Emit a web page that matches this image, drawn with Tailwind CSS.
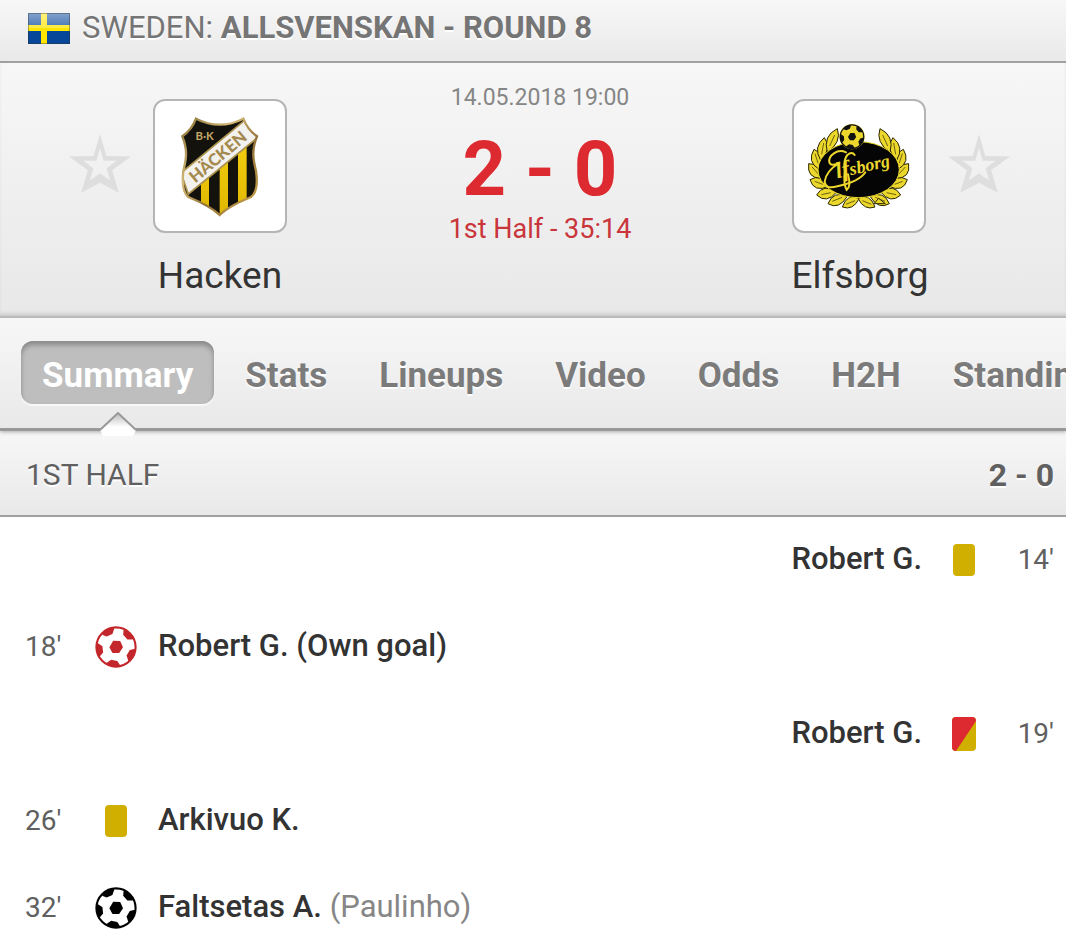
<!DOCTYPE html>
<html lang="en">
<head>
<meta charset="utf-8">
<meta name="viewport" content="width=device-width, initial-scale=1">
<title>Hacken - Elfsborg</title>
<script src="https://cdn.jsdelivr.net/npm/@tailwindcss/browser@4"></script>
</head>
<body class="bg-white font-['Roboto',sans-serif] text-[#333] overflow-x-hidden">

<svg width="0" height="0" class="absolute" aria-hidden="true">
  <defs>
    <clipPath id="ballClip"><circle r="57"/></clipPath>
    <path id="patch" d="M-22-62L-18-48L-10-39L8-38L18-48L22-62Z"/>
    <g id="ball">
      <g clip-path="url(#ballClip)" fill="currentColor">
        <use href="#patch" transform="rotate(-27)"/>
        <use href="#patch" transform="rotate(45)"/>
        <use href="#patch" transform="rotate(117)"/>
        <use href="#patch" transform="rotate(189)"/>
        <use href="#patch" transform="rotate(261)"/>
        <path d="M-8-18L12-17L20 1L9 17L-10 17L-19 1Z"/>
      </g>
      <circle r="56" fill="none" stroke="currentColor" stroke-width="6"/>
    </g>
    <g id="laurel" fill="#ecd72c" stroke="#2a2600" stroke-width="3" stroke-linejoin="round">
      <path d="M226 322Q189 306 175 348Q207 360 226 322Z"/>
      <path d="M190 316Q148 298 132 338Q164 358 190 316Z"/>
      <path d="M158 303Q118 276 98 312Q128 340 158 303Z"/>
      <path d="M134 286Q112 246 78 266Q90 306 134 286Z"/>
      <path d="M112 262Q116 218 74 218Q68 262 112 262Z"/>
      <path d="M104 234Q126 190 90 175Q68 212 104 234Z"/>
      <path d="M110 208Q146 172 121 140Q86 168 110 208Z"/>
      <path d="M130 184Q174 154 160 113Q116 134 130 184Z"/>
      <path d="M213 329L186 340M174 319L145 331M140 305L112 311M116 280L92 271M104 250L84 228M102 216L93 188M113 190L119 156M137 165L152 132" fill="none" stroke-width="2"/>
    </g>
  </defs>
</svg>

<header class="flex h-[63px] items-center gap-3 border-b-2 border-[#a0a0a0] bg-linear-to-b from-[#f7f7f7] to-[#e9e9e9] pl-7 pb-1 text-[31px] text-[#757575] text-shadow-[0_2px_0_#fff]">
  <svg class="h-[31px] w-[42px] shrink-0" viewBox="0 0 42 31" role="img" aria-label="Sweden">
    <defs><linearGradient id="shine" x2="0" y2="1"><stop stop-color="#fff" stop-opacity=".5"/><stop offset="1" stop-color="#fff" stop-opacity=".25"/></linearGradient></defs>
    <rect width="42" height="31" fill="#07479a"/>
    <path d="M13 0h6v31h-6zM0 12h42v6H0z" fill="#fee500"/>
    <rect width="42" height="15" fill="url(#shine)"/>
    <rect x=".5" y=".5" width="41" height="30" fill="none" stroke="#333" stroke-opacity=".4"/>
  </svg>
  <h1 class="whitespace-nowrap">SWEDEN: <b>ALLSVENSKAN - ROUND 8</b></h1>
</header>

<section class="flex h-[255px] justify-center border-b-2 border-[#bdbdbd] bg-linear-to-b from-[#f7f7f7] to-[#e8e8e8] pl-[14px] pt-9 inset-shadow-[0_-4px_4px_-2px_#c8c8c8]">
  <div class="w-80">
    <div class="flex items-center gap-[22px] pl-[9px]">
      <button aria-label="Add Hacken to favourites" class="size-[62px]">
        <svg class="size-full" viewBox="27 33 188 188"><path fill="#dedede" fill-rule="evenodd" d="M121 30L140 97L215 98L158 140L178 208L121 178L64 208L84 140L27 98L102 97ZM121 73L110 111L70 111L101 134L90 171L121 150L152 171L141 134L172 111L132 111Z"/></svg>
      </button>
      <div class="size-[134px] rounded-xl border-2 border-[#b5b5b5] bg-white">
        <svg class="size-full" viewBox="30 30 390 390" role="img" aria-label="Hacken crest">
          <defs>
            <clipPath id="shield"><path id="shieldShape" d="M153 83Q188 101 224 101Q260 101 295 83Q308 117 336 136C316 185 328 215 333 240Q342 300 318 318Q250 346 224 372Q198 346 130 318Q108 300 115 240C120 215 132 185 112 136Q140 117 153 83Z"/></clipPath>
            <linearGradient id="gold" x2="1" y2="1"><stop stop-color="#8c7338"/><stop offset=".35" stop-color="#d3b976"/><stop offset=".6" stop-color="#94733a"/><stop offset="1" stop-color="#d0a74e"/></linearGradient>
            <linearGradient id="stripe" x2="0" y2="1"><stop stop-color="#f4cf10"/><stop offset="1" stop-color="#e0b600"/></linearGradient>
          </defs>
          <g clip-path="url(#shield)">
            <rect x="100" y="70" width="250" height="310" fill="#14120c"/>
            <path d="M168 220h24v150h-24zM224 180h25v200h-25zM279 140h26v220h-26z" fill="url(#stripe)"/>
            <path d="M108 246L299 88L345 134L130 309Z" fill="#f4f2ee" stroke="#ad9350" stroke-width="5"/>
          </g>
          <use href="#shieldShape" fill="none" stroke="url(#gold)" stroke-width="7"/>
          <text x="179" y="146" text-anchor="middle" font-family="Lato, sans-serif" font-weight="700" font-size="34" fill="#c4a968">B·K</text>
          <text transform="translate(230 211) rotate(-40)" text-anchor="middle" font-family="Lato, sans-serif" font-weight="900" font-size="50" fill="#a48a50">HÄCKEN</text>
        </svg>
      </div>
    </div>
    <h2 class="mt-5 text-center text-[37px] leading-[46px]">Hacken</h2>
  </div>

  <div class="-mt-4 w-80 text-center">
    <p class="text-[23px] leading-[30px] text-[#868686]">14.05.2018 19:00</p>
    <p class="mt-5 text-[76px] leading-[72px] font-bold text-[#dc2a30]">2 - 0</p>
    <p class="mt-2 text-[27px] leading-8 text-[#c9353a]">1st Half - 35:14</p>
  </div>

  <div class="w-80">
    <div class="flex items-center justify-end gap-[22px] pr-[10px]">
      <div class="size-[134px] rounded-xl border-2 border-[#b5b5b5] bg-white">
        <svg class="size-full" viewBox="30 30 390 390" role="img" aria-label="Elfsborg crest">
          <use href="#laurel"/>
          <use href="#laurel" transform="translate(448 0) scale(-1 1)"/>
          <path d="M270 338L284 322L304 338Z" fill="#ecd72c" stroke="#2a2600" stroke-width="3"/>
          <ellipse cx="224" cy="236" rx="122" ry="84" fill="#050505" stroke="#ecd72c" stroke-width="3"/>
          <circle cx="204" cy="137" r="38" fill="#ecd72c"/>
          <use href="#ball" transform="translate(204 137) scale(.63)" color="#111"/>
          <g fill="none" stroke="#ecd72c" stroke-width="6" stroke-linecap="round">
            <path d="M186 184C160 172 132 194 136 214Q140 228 166 216M166 216Q126 240 122 272Q124 296 160 286Q226 272 244 244"/>
            <path d="M212 192Q204 180 190 192Q178 206 182 240Q178 280 188 297Q202 288 192 250"/>
          </g>
          <text transform="translate(160 262) rotate(-13)" font-family="Liberation Serif, serif" font-style="italic" font-weight="700" font-size="54" fill="#ecd72c"><tspan font-size="68">lf</tspan>sborg</text>
        </svg>
      </div>
      <button aria-label="Add Elfsborg to favourites" class="size-[62px]">
        <svg class="size-full" viewBox="27 33 188 188"><path fill="#dedede" fill-rule="evenodd" d="M121 30L140 97L215 98L158 140L178 208L121 178L64 208L84 140L27 98L102 97ZM121 73L110 111L70 111L101 134L90 171L121 150L152 171L141 134L172 111L132 111Z"/></svg>
      </button>
    </div>
    <h2 class="mt-5 text-center text-[37px] leading-[46px]">Elfsborg</h2>
  </div>
</section>

<nav class="relative flex h-[113px] items-start gap-[10px] overflow-x-clip border-b-3 border-[#999] bg-linear-to-b from-[#f7f7f7] to-[#e9e9e9] pl-[21px] pt-[23px] text-[35px] leading-[70px] font-bold whitespace-nowrap text-[#7b7b7b] shadow-[0_1px_4px_#aaa]">
  <div class="relative">
    <a href="#summary" aria-current="page" class="block h-[63px] rounded-xl bg-[#bebebe] px-[21px] text-white inset-shadow-[0_4px_5px_#8a8a8a] shadow-[0_2px_0_#f8f8f8]">Summary</a>
    <svg class="absolute top-[71px] left-1/2 h-6 w-10 -translate-x-1/2" viewBox="0 0 40 24" aria-hidden="true">
      <defs><linearGradient id="notch" x2="0" y2="1"><stop stop-color="#bbb"/><stop offset=".6" stop-color="#fff"/></linearGradient></defs>
      <path d="M2 18L20 1L38 18L35 24H5Z" fill="url(#notch)"/>
      <path d="M2 18L20 1L38 18" fill="none" stroke="#999" stroke-width="2"/>
    </svg>
  </div>
  <a href="#stats" class="px-[21px] text-shadow-[0_2px_0_#fff]">Stats</a>
  <a href="#lineups" class="px-[21px] text-shadow-[0_2px_0_#fff]">Lineups</a>
  <a href="#video" class="px-[21px] text-shadow-[0_2px_0_#fff]">Video</a>
  <a href="#odds" class="px-[21px] text-shadow-[0_2px_0_#fff]">Odds</a>
  <a href="#h2h" class="px-[21px] text-shadow-[0_2px_0_#fff]">H2H</a>
  <a href="#standings" class="px-[21px] text-shadow-[0_2px_0_#fff]">Standings</a>
</nav>

<main id="summary">
  <h3 class="flex h-[86px] items-center justify-between border-b-2 border-[#a0a0a0] bg-linear-to-b from-[#f7f7f7] to-[#e9e9e9] pt-1 pr-3 pl-[26px] text-3xl text-[#606060] text-shadow-[0_2px_0_#fff]">
    <span>1ST HALF</span><b class="text-[32px]">2 - 0</b>
  </h3>
  <ul class="text-[31px] font-medium">
    <li class="flex h-[87px] items-center justify-end pr-3 pb-[2px]">
      <span>Robert G.</span>
      <svg class="ml-[22px] size-10" viewBox="0 0 40 40" role="img" aria-label="Yellow card"><rect x="9" y="4" width="22" height="32" rx="4" fill="#d1af00"/></svg>
      <time class="w-[70px] text-right text-[28px] font-normal text-[#606060]">14'</time>
    </li>
    <li class="flex h-[87px] items-center pb-[2px] pl-[25px]">
      <time class="w-[70px] text-[28px] font-normal text-[#606060]">18'</time>
      <svg class="mr-[21px] size-[42px] text-[#c3272b]" viewBox="-60 -60 120 120" role="img" aria-label="Own goal"><use href="#ball"/></svg>
      <span>Robert G. (Own goal)</span>
    </li>
    <li class="flex h-[87px] items-center justify-end pr-3 pb-[2px]">
      <span>Robert G.</span>
      <svg class="ml-[22px] size-10" viewBox="0 0 40 40" role="img" aria-label="Second yellow card">
        <rect x="8" y="3" width="24" height="34" rx="4" fill="#d1af00"/>
        <path d="M12 3H28Q32 3 32 7L12 37Q8 37 8 33V7Q8 3 12 3Z" fill="#dc2a30"/>
      </svg>
      <time class="w-[70px] text-right text-[28px] font-normal text-[#606060]">19'</time>
    </li>
    <li class="flex h-[87px] items-center pb-[2px] pl-[25px]">
      <time class="w-[70px] text-[28px] font-normal text-[#606060]">26'</time>
      <svg class="mr-[21px] size-[42px]" viewBox="0 0 42 42" role="img" aria-label="Yellow card"><rect x="10" y="5" width="22" height="32" rx="4" fill="#d1af00"/></svg>
      <span>Arkivuo K.</span>
    </li>
    <li class="flex h-[74px] items-center pl-[25px] pt-[11px]">
      <time class="w-[70px] text-[28px] font-normal text-[#606060]">32'</time>
      <svg class="mr-[21px] size-[42px] text-black" viewBox="-60 -60 120 120" role="img" aria-label="Goal"><use href="#ball"/></svg>
      <span>Faltsetas A. <span class="font-normal text-[#868686]">(Paulinho)</span></span>
    </li>
  </ul>
</main>
</body>
</html>
